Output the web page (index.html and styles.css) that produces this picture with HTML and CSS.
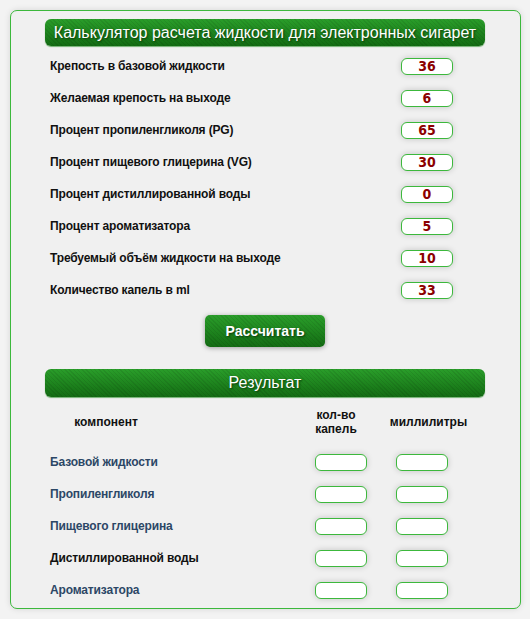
FILE: index.html
```html
<!DOCTYPE html>
<html lang="ru">
<head>
    <meta charset="UTF-8">
    <meta name="viewport" content="width=device-width, initial-scale=1.0">
    <title>Калькулятор жидкости</title>
    <link rel="stylesheet" href="styles.css">
</head>
<body>
    <div class="calc">
        <div class="bar-title">Калькулятор расчета жидкости для электронных сигарет</div>

        <div class="params">
            <div class="param-label">Крепость в базовой жидкости</div>
            <input class="param-input" type="text" value="36">
            <div class="param-label">Желаемая крепость на выходе</div>
            <input class="param-input" type="text" value="6">
            <div class="param-label">Процент пропиленгликоля (PG)</div>
            <input class="param-input" type="text" value="65">
            <div class="param-label">Процент пищевого глицерина (VG)</div>
            <input class="param-input" type="text" value="30">
            <div class="param-label">Процент дистиллированной воды</div>
            <input class="param-input" type="text" value="0">
            <div class="param-label">Процент ароматизатора</div>
            <input class="param-input" type="text" value="5">
            <div class="param-label">Требуемый объём жидкости на выходе</div>
            <input class="param-input" type="text" value="10">
            <div class="param-label">Количество капель в ml</div>
            <input class="param-input" type="text" value="33">
        </div>

        <div class="actions">
            <button class="calc-button">Рассчитать</button>
        </div>

        <div class="bar-title result-title">Результат</div>

        <div class="results">
            <div class="th th-name">компонент</div>
            <div class="th th-drops">кол-во капель</div>
            <div class="th th-ml">миллилитры</div>

            <div class="res-label">Базовой жидкости</div>
            <input class="res-input" type="text">
            <input class="res-input" type="text">

            <div class="res-label">Пропиленгликоля</div>
            <input class="res-input" type="text">
            <input class="res-input" type="text">

            <div class="res-label">Пищевого глицерина</div>
            <input class="res-input" type="text">
            <input class="res-input" type="text">

            <div class="res-label water">Дистиллированной воды</div>
            <input class="res-input" type="text">
            <input class="res-input" type="text">

            <div class="res-label">Ароматизатора</div>
            <input class="res-input" type="text">
            <input class="res-input" type="text">
        </div>
    </div>
</body>
</html>
```

FILE: styles.css
```css
body, html {
    margin: 0;
    padding: 0;
    background-color: #f3f3f3;
    font-family: "Liberation Sans", Arial, sans-serif;
}

.calc {
    margin: 10px;
    width: 509px;
    height: 589px;
    border: 1px solid #3cb83c;
    border-radius: 7px;
    background-color: #f0f0f0;
    box-shadow: 0 0 6px rgba(0, 0, 0, 0.12);
    padding-top: 8px;
}

.bar-title {
    margin: 0 35px 0 34px;
    height: 27px;
    line-height: 27px;
    border-radius: 6px;
    text-align: center;
    white-space: nowrap;
    color: #fff;
    font-size: 16px;
    text-shadow: 1px 1px 2px #0a3a0a;
    background:
        repeating-linear-gradient(45deg, rgba(0, 0, 0, 0.08) 0 1px, transparent 1px 3px),
        linear-gradient(#2a9e2a, #136c13);
    box-shadow: 0 1px 1px rgba(60, 150, 60, 0.7);
}

.params {
    display: grid;
    grid-template-columns: 351px 52px;
    grid-auto-rows: 32px;
    align-items: center;
    padding-left: 39px;
    margin-top: 4px;
}

.param-label {
    font-size: 12px;
    font-weight: bold;
    letter-spacing: -0.15px;
    color: #111;
}

.param-input,
.res-input {
    box-sizing: border-box;
    width: 52px;
    height: 17px;
    padding: 0;
    border: 1px solid #3cb83c;
    border-radius: 6px;
    background-color: #fff;
    box-shadow: 0 0 6px rgba(0, 0, 0, 0.18);
    outline: none;
}

.param-input {
    text-align: center;
    color: #8b0000;
    font-family: "DejaVu Sans Condensed", "DejaVu Sans", sans-serif;
    font-stretch: condensed;
    font-weight: bold;
    font-size: 14px;
    line-height: 15px;
}

.actions {
    display: flex;
    justify-content: center;
    margin-top: 9px;
    padding-right: 1px;
}

.calc-button {
    width: 120px;
    height: 32px;
    border: none;
    border-radius: 5px;
    color: #fff;
    font-family: "Liberation Sans", Arial, sans-serif;
    font-size: 14px;
    font-weight: bold;
    text-shadow: 1px 1px 2px #0a3a0a;
    background:
        repeating-linear-gradient(45deg, rgba(0, 0, 0, 0.08) 0 1px, transparent 1px 3px),
        linear-gradient(#2a9e2a, #136c13);
    box-shadow: 0 1px 5px rgba(0, 0, 0, 0.35);
    cursor: pointer;
}

.result-title {
    margin-top: 22px;
    height: 28px;
    line-height: 28px;
}

.results {
    display: grid;
    grid-template-columns: 265px 81px 52px;
    grid-template-rows: 49px repeat(5, 32px);
    align-items: center;
    padding-left: 39px;
}

.th {
    align-self: start;
    height: 40px;
    margin-top: 5px;
    display: flex;
    align-items: center;
    justify-content: center;
    text-align: center;
    font-size: 12px;
    font-weight: bold;
    color: #111;
    line-height: 14px;
}

.th-name {
    width: 112px;
}

.th-drops {
    width: 44px;
    margin-left: -1px;
}

.th-ml {
    width: 75px;
    margin-left: -5px;
}

.res-label {
    font-size: 12px;
    font-weight: bold;
    letter-spacing: -0.15px;
    color: #2c4766;
}

.res-label.water {
    color: #111;
}
```
